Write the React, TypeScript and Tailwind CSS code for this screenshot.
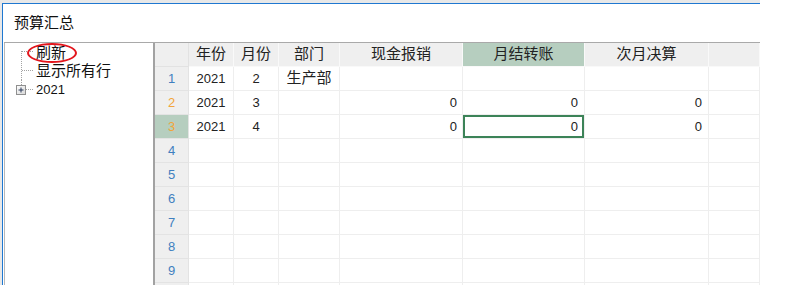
import React from 'react'

const FONT = { fontFamily: '"Liberation Sans", "Noto Sans CJK SC", sans-serif' }

const columns = ['年份', '月份', '部门', '现金报销', '月结转账', '次月决算', '']

type Row = { n: number; year?: string; month?: string; dept?: string; cash?: string; transfer?: string; next?: string }

const rows: Row[] = [
  { n: 1, year: '2021', month: '2', dept: '生产部' },
  { n: 2, year: '2021', month: '3', cash: '0', transfer: '0', next: '0' },
  { n: 3, year: '2021', month: '4', cash: '0', transfer: '0', next: '0' },
  { n: 4 },
  { n: 5 },
  { n: 6 },
  { n: 7 },
  { n: 8 },
  { n: 9 },
  { n: 10 },
]

const gridCols = 'grid grid-cols-[34px_45px_45px_61px_123px_122px_124px_1fr]'

function TreeLines({ kind }: { kind: 'first' | 'mid' | 'last' }) {
  return (
    <svg width="31" height="19" className="shrink-0">
      {kind === 'first' && <line x1="16.5" y1="8" x2="16.5" y2="19" stroke="#a3a3a3" strokeDasharray="1 1" />}
      {kind === 'mid' && <line x1="16.5" y1="0" x2="16.5" y2="19" stroke="#a3a3a3" strokeDasharray="1 1" />}
      {kind === 'last' && <line x1="16.5" y1="0" x2="16.5" y2="5" stroke="#a3a3a3" strokeDasharray="1 1" />}
      {kind === 'last' ? (
        <>
          <line x1="21" y1="9.5" x2="29" y2="9.5" stroke="#a3a3a3" strokeDasharray="1 1" />
          <defs>
            <linearGradient id="pb" x1="0" y1="0" x2="1" y2="1">
              <stop offset="0" stopColor="#ffffff" />
              <stop offset="1" stopColor="#d6d6d6" />
            </linearGradient>
          </defs>
          <rect x="11.5" y="5.5" width="9" height="9" fill="url(#pb)" stroke="#8f8f8f" />
          <line x1="13.5" y1="10" x2="18.5" y2="10" stroke="#2a3a5a" />
          <line x1="16" y1="7.5" x2="16" y2="12.5" stroke="#2a3a5a" />
        </>
      ) : (
        <line x1="17" y1={kind === 'first' ? 8.5 : 9.5} x2="29" y2={kind === 'first' ? 8.5 : 9.5} stroke="#a3a3a3" strokeDasharray="1 1" />
      )}
    </svg>
  )
}

function TreePanel() {
  return (
    <div className="relative w-[149px] h-full bg-white border-l border-[#b9b9b9]">
      <div className="flex flex-col text-[15px] text-[#111]">
        <div className="flex items-center h-[18px]">
          <TreeLines kind="first" />
          <span className="leading-none">刷新</span>
        </div>
        <div className="flex items-center h-[19px]">
          <TreeLines kind="mid" />
          <span className="leading-none">显示所有行</span>
        </div>
        <div className="flex items-center h-[18px]">
          <TreeLines kind="last" />
          <span className="leading-none text-[13px]">2021</span>
        </div>
      </div>
      {/* red mark drawn over the first node */}
      <div className="absolute left-[22px] top-0 w-[50px] h-[20px] rounded-[50%] border-2 border-[#e3161d]" />
    </div>
  )
}

function Cell({ children, align = 'center', className = '' }: { children?: React.ReactNode; align?: 'center' | 'right'; className?: string }) {
  return (
    <div
      className={`h-[24px] flex items-center border-r border-b border-[#eeeeee] text-[13px] text-[#222] overflow-hidden ${
        align === 'right' ? 'justify-end pr-[5px]' : 'justify-center'
      } ${className}`}
    >
      {children}
    </div>
  )
}

function Grid() {
  return (
    <div className="flex-1 h-full overflow-hidden bg-white">
      <div className={gridCols}>
        <div className="h-[24px] bg-[#efefef] border-r border-b border-[#e2e2e2]" />
        {columns.map((c, i) => (
          <div
            key={i}
            className={`h-[24px] flex items-center justify-center border-r border-b border-[#f9f9f9] text-[15px] text-[#222] ${
              i === 4 ? 'bg-[#b6cebf]' : 'bg-[#efefef]'
            }`}
          >
            {c}
          </div>
        ))}
      </div>
      {rows.map((r) => (
        <div key={r.n} className={gridCols}>
          <div
            className={`h-[24px] flex items-center justify-center border-r border-b border-[#e3e3e3] text-[13px] ${
              r.n === 3 ? 'bg-[#b6cebf]' : 'bg-[#efefef]'
            } ${r.n === 2 || r.n === 3 ? 'text-[#f2a53a]' : 'text-[#3f7fbf]'}`}
          >
            {r.n < 10 ? r.n : ''}
          </div>
          <Cell>{r.year}</Cell>
          <Cell>{r.month}</Cell>
          <Cell className="text-[15px]">{r.dept}</Cell>
          <Cell align="right">{r.cash}</Cell>
          <Cell align="right" className={r.n === 3 ? 'shadow-[inset_0_0_0_2px_#3c8358] pr-[6px]' : 'pr-[6px]'}>
            {r.transfer}
          </Cell>
          <Cell align="right" className="pr-[6px]">{r.next}</Cell>
          <Cell />
        </div>
      ))}
    </div>
  )
}

export default function App() {
  return (
    <div className="w-[788px] h-[305px] bg-white overflow-hidden" style={FONT}>
      <div className="w-[760px] h-[285px] flex flex-col bg-[#e8e8e8] pt-[3px] pl-[2px]">
        <div className="flex-1 flex flex-col min-h-0 border-t border-l border-[#1f78d1] bg-white pl-[1px]">
          <div className="h-[38px] shrink-0 flex items-center pl-[10px] text-[15px] text-[#111]">预算汇总</div>
          <div className="flex-1 min-h-0 flex border-t border-[#a9a9a9]">
            <TreePanel />
            <div className="w-[2px] h-full bg-[#a2a2a2] shrink-0" />
            <Grid />
          </div>
        </div>
      </div>
    </div>
  )
}
